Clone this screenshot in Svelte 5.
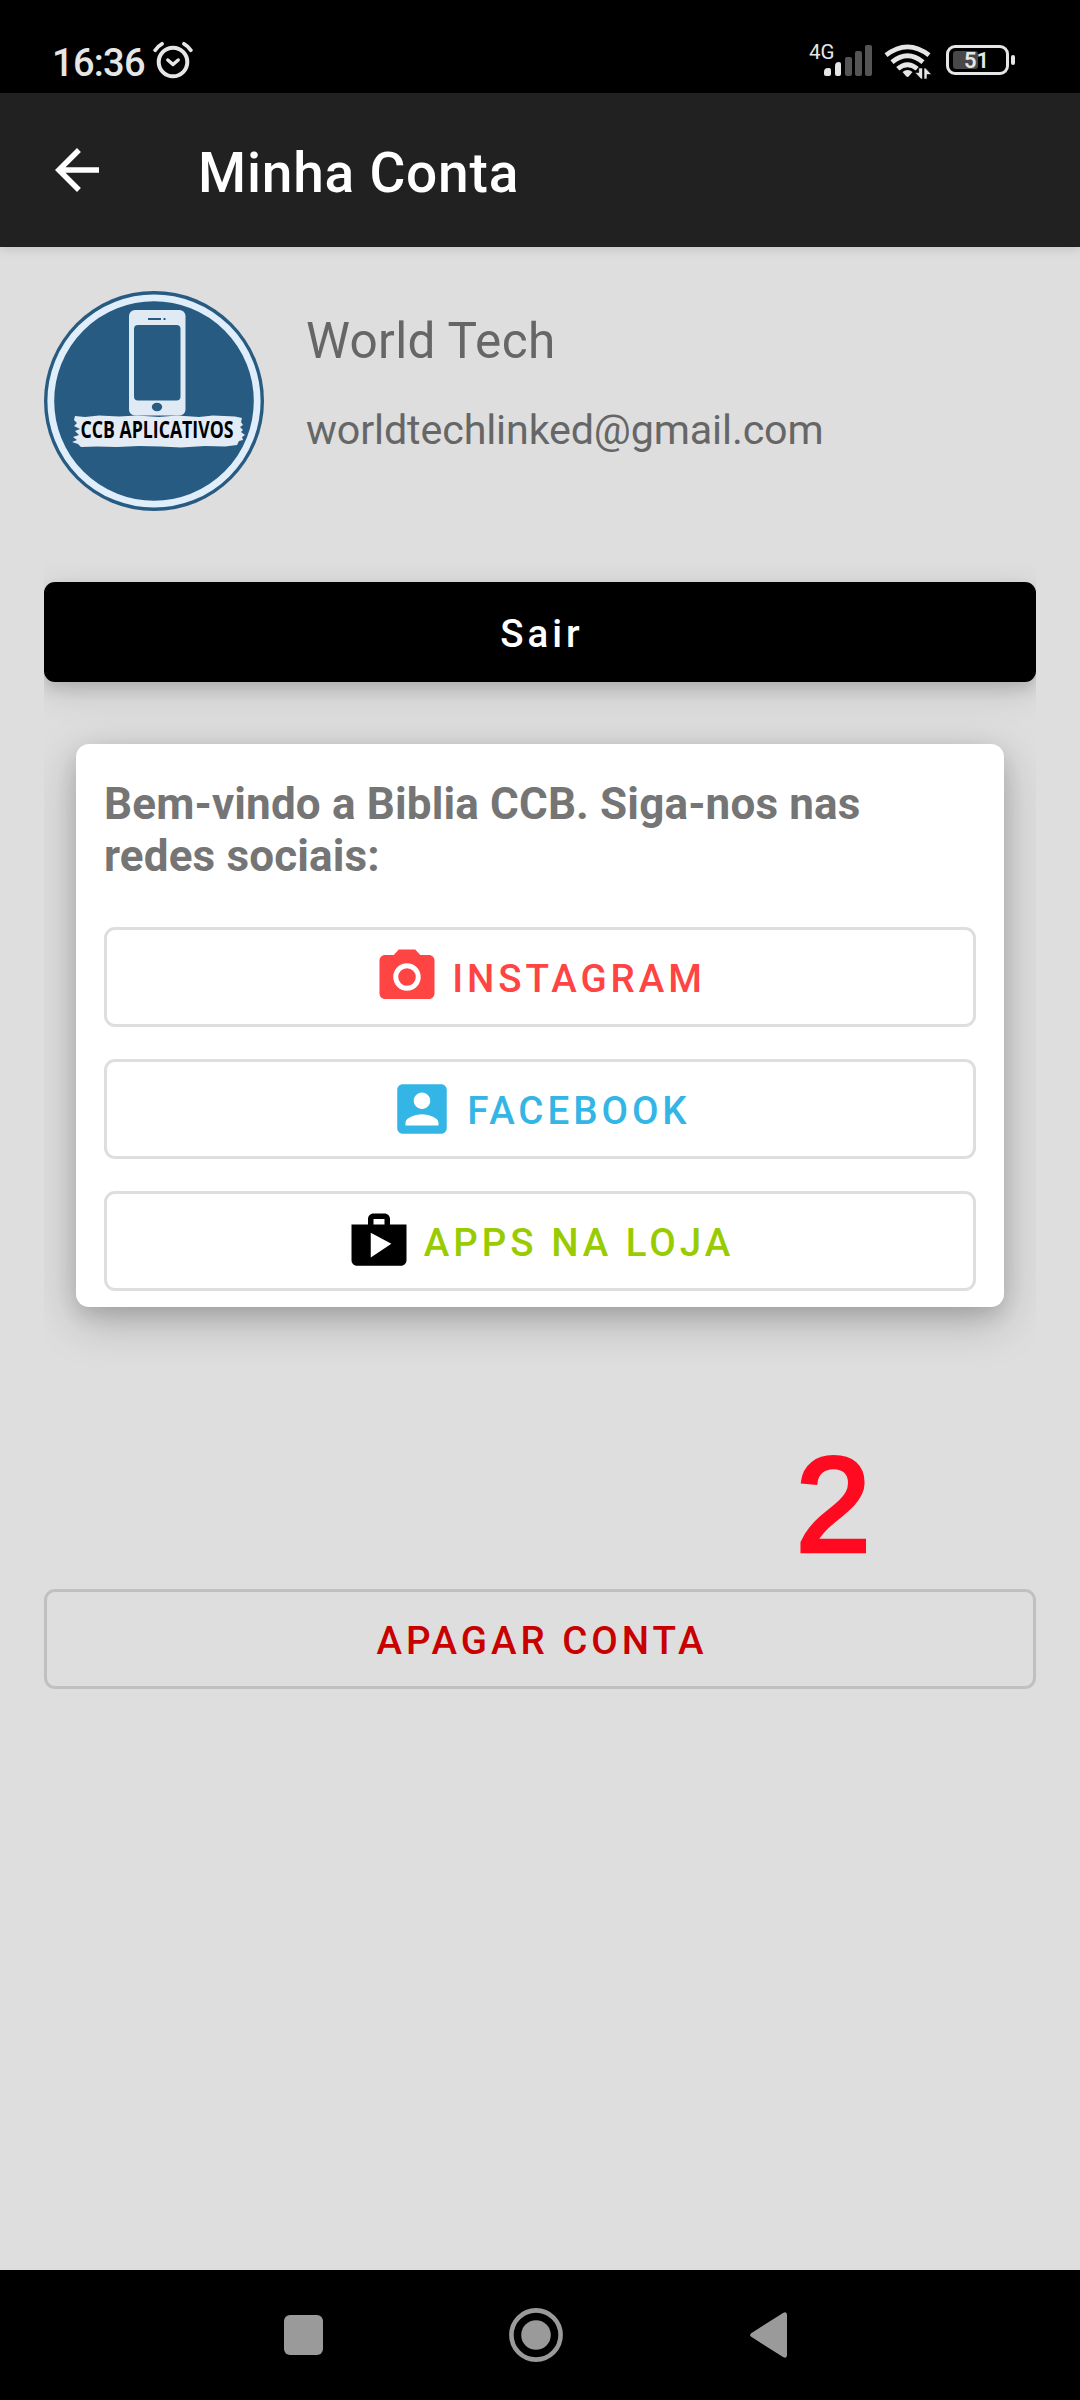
<!-- Account screen: profile, sign out, social links and account removal -->
<script>
  const user = {
    name: "World Tech",
    email: "worldtechlinked@gmail.com",
  };

  // Material icons, 24x24 grid
  const links = [
    {
      id: "instagram",
      label: "INSTAGRAM",
      icon: "M9 2 7.17 4H4c-1.1 0-2 .9-2 2v12c0 1.1.9 2 2 2h16c1.1 0 2-.9 2-2V6c0-1.1-.9-2-2-2h-3.17L15 2H9zm3 15c-2.76 0-5-2.24-5-5s2.24-5 5-5 5 2.24 5 5-2.24 5-5 5z M15.2 12a3.2 3.2 0 1 1-6.4 0 3.2 3.2 0 0 1 6.4 0z",
    },
    {
      id: "facebook",
      label: "FACEBOOK",
      icon: "M3 5v14c0 1.1.89 2 2 2h14c1.1 0 2-.9 2-2V5c0-1.1-.9-2-2-2H5c-1.11 0-2 .9-2 2zm12 4c0 1.66-1.34 3-3 3s-3-1.34-3-3 1.34-3 3-3 3 1.34 3 3zm-9 8c0-2 4-3.1 6-3.1s6 1.1 6 3.1v1H6v-1z",
    },
    {
      id: "store",
      label: "APPS NA LOJA",
      icon: "M16 6V4c0-1.11-.89-2-2-2h-4c-1.11 0-2 .89-2 2v2H2v13c0 1.11.89 2 2 2h16c1.11 0 2-.89 2-2V6h-6zm-6-2h4v2h-4V4zM9 18V9l7.5 4L9 18z",
    },
  ];

  const bars = [
    { height: 8, on: true },
    { height: 14, on: true },
    { height: 19, on: false },
    { height: 25, on: false },
    { height: 31, on: false },
  ];
</script>

<div class="screen">
  <div class="status">
    <span class="time">16:36</span>
    <svg class="alarm" viewBox="0 0 40 38" width="40" height="38">
      <g fill="none" stroke="#e6e6e6" stroke-linecap="round">
        <circle cx="20" cy="21" r="14.3" stroke-width="4" />
        <path d="M2.2 9.2Q5 5 9 2.8M37.8 9.2Q35 5 31 2.8" stroke-width="3.8" />
        <path d="M14.8 19l5.2 4.6 5.2-4.6" stroke-width="3.4" stroke-linejoin="round" />
      </g>
    </svg>
    <div class="signal">
      <span class="net">4G</span>
      <div class="bars">
        {#each bars as bar}
          <i class:on={bar.on} style="height: {bar.height}px"></i>
        {/each}
      </div>
    </div>
    <svg class="wifi" viewBox="0 0 48 38" width="48" height="38">
      <g fill="none" stroke="#e6e6e6" stroke-width="4.8">
        <path d="M2 13.2Q23.5-3.5 45 13.2" />
        <path d="M8 20.2Q23.5 7.5 39 20.2" />
        <path d="M13.8 26.8Q23.5 18.5 33.2 26.8" />
      </g>
      <path d="M18.5 30q5-3.8 10 0l-3.6 4.2q-1.4 1.4-2.8 0z" fill="#e6e6e6" />
      <path d="M34.7 26h3.8v11H37l-6-6.5h3.7zM40 37V26h1.5l6 6.5H43V37z" fill="#e6e6e6" stroke="#000" stroke-width=".6" />
    </svg>
    <div class="battery">
      <div class="cell">
        <div class="level"></div>
        <span>51</span>
      </div>
      <i></i>
    </div>
  </div>

  <header>
    <svg class="back" viewBox="0 0 24 24" width="66" height="66">
      <path fill="#fff" d="M20 11H7.83l5.59-5.59L12 4l-8 8 8 8 1.41-1.41L7.83 13H20z" />
    </svg>
    <h1>Minha Conta</h1>
  </header>

  <main>
    <section class="profile">
      <svg class="avatar" viewBox="0 0 220 220" width="220" height="220">
        <circle cx="110" cy="110" r="110" fill="#285b82" />
        <circle cx="110" cy="110" r="103.2" fill="none" stroke="#dfeefa" stroke-width="6.8" />
        <rect x="85" y="19" width="56.5" height="105.5" rx="6" fill="#dfeaf5" />
        <rect x="90" y="34" width="46.5" height="75.5" rx="4" fill="#285b82" />
        <path d="M104 28h13M119.5 28h2" stroke="#285b82" stroke-width="2" />
        <ellipse cx="113" cy="116" rx="5.2" ry="4.2" fill="#285b82" />
        <path
          fill="#e3ebf4"
          d="M31 125l10 1 14-1.5 20 1 18-1 22 1.5 18-1.5 22 1.5 14-1.5 22 1 7 1.5-1 4 2 3-3 2 3 3-2 2 4 3-3 2 1 3-4 1-2 4-12 1.5-20-.5-24 1.5-20-1-22-.5-22 1-20-.5-16 .5-3-3-6-2 5-2-4-3 6-2-4-4 5-2-6-3 3-3-3-3z"
        />
        <text x="36.5" y="147.3" textLength="153" lengthAdjust="spacingAndGlyphs">CCB APLICATIVOS</text>
      </svg>
      <div class="who">
        <p class="name">{user.name}</p>
        <p class="email">{user.email}</p>
      </div>
    </section>

    <div class="actions">
      <button class="logout">Sair</button>

      <section class="card">
        <h2>Bem-vindo a Biblia CCB. Siga-nos nas redes sociais:</h2>
        {#each links as link (link.id)}
          <button class="outlined {link.id}">
            <svg viewBox="0 0 24 24" width="66" height="66">
              <path d={link.icon} />
            </svg>
            <span>{link.label}</span>
          </button>
        {/each}
      </section>
    </div>

    <p class="step">2</p>

    <button class="outlined delete"><span>APAGAR CONTA</span></button>
  </main>

  <nav>
    <svg viewBox="0 0 39 40" width="39" height="40"><rect width="39" height="40" rx="6" /></svg>
    <svg viewBox="0 0 54 54" width="54" height="54">
      <circle cx="27" cy="27" r="24.6" fill="none" stroke="#9a9a9a" stroke-width="4.6" />
      <circle cx="27" cy="27" r="14.8" />
    </svg>
    <svg viewBox="0 0 37 46" width="37" height="46">
      <path d="M1.2 21.2 33 1q4-2 4 2v40q0 4-4 2L1.2 24.8q-2.2-1.8 0-3.6z" />
    </svg>
  </nav>
</div>

<style>
  :global(body) {
    margin: 0;
    background: #dedede;
  }

  .screen {
    width: 1080px;
    height: 2400px;
    display: flex;
    flex-direction: column;
    background: #dedede;
    font-family: Roboto, "Liberation Sans", sans-serif;
    overflow: hidden;
  }

  h1, h2, p {
    margin: 0;
  }

  svg {
    display: block;
    flex: none;
  }

  button {
    font-family: inherit;
    font-size: 38.5px;
    font-weight: 500;
    letter-spacing: 3.95px;
    height: 100px;
    border-radius: 11px;
    box-sizing: border-box;
    display: flex;
    align-items: center;
    justify-content: center;
    cursor: pointer;
  }

  /* Status bar */
  .status {
    height: 93px;
    box-sizing: border-box;
    padding: 41px 65px 0 52px;
    display: flex;
    align-items: flex-start;
    background: #000;
    color: #e6e6e6;
  }

  .time {
    font-size: 38px;
    line-height: 44px;
    font-weight: 500;
    letter-spacing: -0.7px;
    width: 101px;
  }

  .signal {
    display: flex;
    margin-left: auto;
    margin-top: 1px;
  }

  .net {
    font-size: 20.5px;
    line-height: 20px;
    margin-right: -10px;
  }

  .bars {
    display: flex;
    align-items: flex-end;
    gap: 3.4px;
    height: 34px;
  }

  .bars i {
    width: 6.8px;
    background: #555;
    border-radius: 2px;
  }

  .bars i.on {
    background: #e6e6e6;
    border-top-left-radius: 4px;
  }

  .wifi {
    margin: 1px 14px 0 12px;
  }

  .battery {
    display: flex;
    align-items: center;
    gap: 2px;
    margin-top: 4px;
  }

  .cell {
    display: grid;
    width: 63px;
    height: 30px;
    box-sizing: border-box;
    border: 3px solid #e6e6e6;
    border-radius: 9px;
    padding: 3px 4px;
  }

  .level, .cell span {
    grid-area: 1 / 1;
  }

  .level {
    width: 25px;
    height: 18px;
    background: #484848;
    border-radius: 3px;
  }

  .cell span {
    font-size: 22px;
    line-height: 20px;
    font-weight: 600;
    text-align: center;
    padding-right: 2px;
  }

  .battery i {
    width: 4px;
    height: 10px;
    background: #e6e6e6;
    border-radius: 2px;
  }

  /* App bar */
  header {
    height: 154px;
    display: flex;
    align-items: center;
    gap: 88px;
    padding-left: 44px;
    background: #212121;
    color: #fff;
    box-shadow: 0 2px 10px rgba(0, 0, 0, 0.12);
    z-index: 1;
  }

  h1 {
    font-size: 55px;
    line-height: 64px;
    font-weight: 500;
    letter-spacing: 0.8px;
    padding-top: 5px;
  }

  main {
    flex: 1;
    display: flex;
    flex-direction: column;
    padding: 44px 44px 0;
  }

  /* Profile */
  .profile {
    display: flex;
    gap: 42px;
  }

  .avatar {
    overflow: visible;
  }

  .avatar text {
    font-family: "Open Sans", "Noto Sans", sans-serif;
    font-size: 23.5px;
    font-weight: 700;
  }

  .who {
    color: #666;
    padding-top: 21px;
  }

  .name {
    font-size: 49.5px;
    line-height: 58px;
    letter-spacing: 0.35px;
  }

  .email {
    font-size: 41.25px;
    line-height: 48px;
    letter-spacing: -0.14px;
    padding-top: 36px;
  }

  /* Shadows are cut off at the sides of this block */
  .actions {
    padding: 71px 0 60px;
    overflow: hidden;
  }

  .logout {
    width: 100%;
    border: 0;
    padding: 3px 0 0 4px;
    background: #000;
    color: #fff;
    box-shadow: 0 7px 14px rgba(0, 0, 0, 0.12), 0 10px 36px rgba(0, 0, 0, 0.13);
  }

  .card {
    margin: 62px 32px 0;
    padding: 34px 28px 16px;
    background: #fff;
    border-radius: 13px;
    display: flex;
    flex-direction: column;
    gap: 32px;
    box-shadow: 0 8px 20px rgba(0, 0, 0, 0.12), 0 14px 48px rgba(0, 0, 0, 0.22);
  }

  h2 {
    font-size: 44px;
    line-height: 52px;
    font-weight: 700;
    letter-spacing: 0.15px;
    color: #757575;
    padding-bottom: 13px;
  }

  .outlined {
    width: 100%;
    padding: 0;
    gap: 12px;
    border: 3px solid #dedede;
    background: transparent;
  }

  .outlined span {
    padding-top: 3px;
  }

  .outlined svg {
    fill: currentColor;
  }

  .instagram {
    color: #ff4444;
  }

  .facebook {
    color: #33b5e5;
  }

  .store {
    color: #99cc00;
  }

  .store svg {
    fill: #000;
  }

  .step {
    font-family: "Liberation Sans", Arial, sans-serif;
    font-size: 134px;
    line-height: 140px;
    color: #ff0a20;
    -webkit-text-stroke: 4.5px #ff0a20;
    padding-left: 752px;
    margin-top: 68px;
  }

  .delete {
    color: #c80000;
    border-color: #c0c0c0;
    padding-left: 4px;
    margin-top: 14px;
  }

  /* System navigation */
  nav {
    height: 130px;
    box-sizing: border-box;
    display: flex;
    align-items: center;
    justify-content: space-between;
    padding: 0 293px 0 284px;
    background: #000;
    fill: #9a9a9a;
  }

  nav svg:nth-child(2) {
    margin-right: 2px;
  }
</style>
